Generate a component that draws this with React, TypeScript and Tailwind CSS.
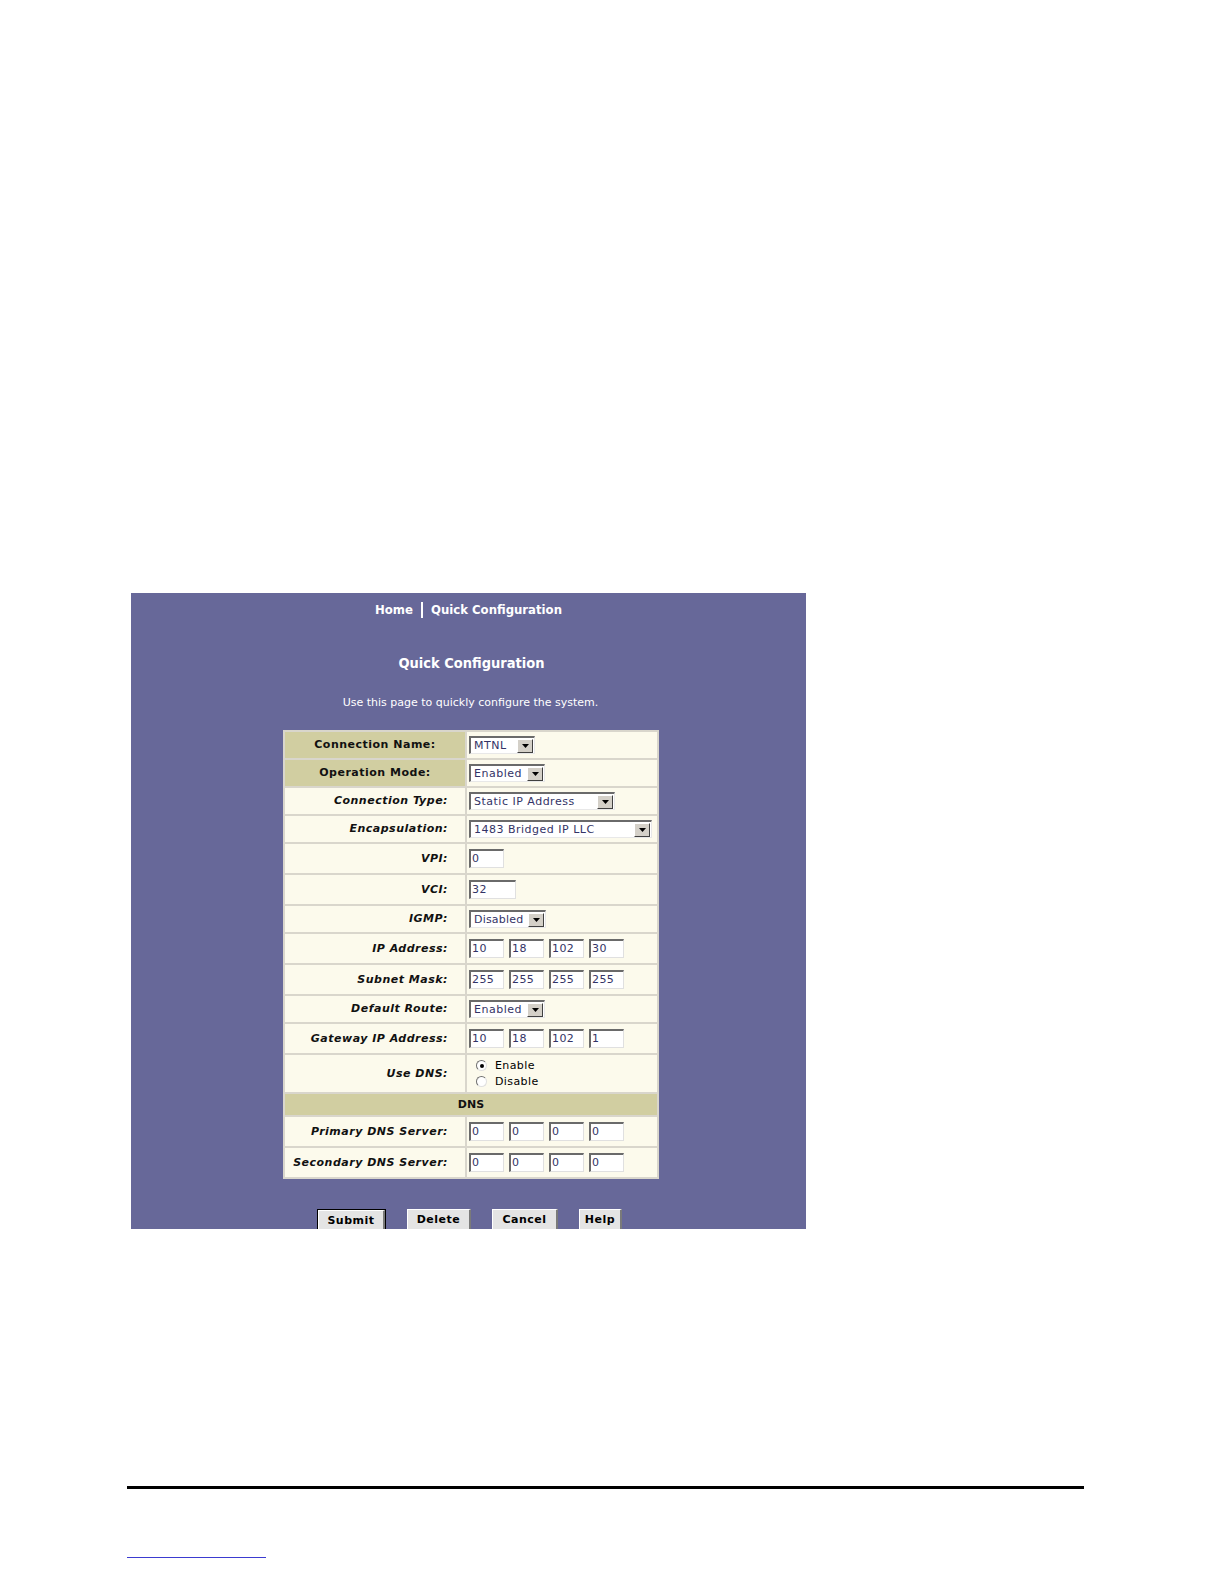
import React from "react";

const labelFont = "font-['DejaVu_Sans',Verdana,sans-serif]";

function Arrow() {
  return (
    <div className="w-[16px] h-[14px] bg-[#d4d0c8] border-t border-l border-t-white border-l-white border-b border-r border-b-[#404040] border-r-[#404040] flex items-center justify-center shrink-0">
      <svg width="7" height="4" viewBox="0 0 7 4">
        <path d="M0 0 H7 L3.5 4 Z" fill="#000" />
      </svg>
    </div>
  );
}

function Sel({ v, cls, tight }: { v: string; cls: string; tight?: boolean }) {
  return (
    <div
      className={`inline-flex items-center justify-between h-[18px] bg-white border-t-2 border-l-2 border-t-[#6a6a6a] border-l-[#6a6a6a] border-b border-r border-b-[#e8e8e8] border-r-[#e8e8e8] pl-[3px] pr-[1px] ${cls}`}
    >
      <span
        className={`${labelFont} text-[11px] leading-[14px] text-[#333366] ${
          tight ? "tracking-[0.2px]" : "tracking-[0.5px]"
        } whitespace-nowrap`}
      >
        {v}
      </span>
      <Arrow />
    </div>
  );
}

function Inp({ v, cls = "w-[35px]" }: { v: string; cls?: string }) {
  return (
    <div
      className={`h-[19px] bg-white border-t-2 border-l-2 border-t-[#6a6a6a] border-l-[#6a6a6a] border-b border-r border-b-[#e0e0e0] border-r-[#e0e0e0] pl-[1px] flex items-center shrink-0 ${cls}`}
    >
      <span className={`${labelFont} text-[11px] leading-[14px] text-[#333366] tracking-[0.4px]`}>{v}</span>
    </div>
  );
}

function Quad({ a }: { a: string[] }) {
  return (
    <div className="flex gap-[5px]">
      {a.map((x, i) => (
        <Inp key={i} v={x} cls="w-[35px]" />
      ))}
    </div>
  );
}

function Radio({ checked }: { checked?: boolean }) {
  return (
    <div className="w-[11px] h-[11px] rounded-full bg-white border border-t-[#707070] border-l-[#707070] border-b-[#e0e0e0] border-r-[#e0e0e0] flex items-center justify-center">
      {checked && <div className="w-[4px] h-[4px] rounded-full bg-black" />}
    </div>
  );
}

type Row = {
  label: string;
  h: string;
  head?: boolean;
  val: React.ReactNode;
};

const rows: Row[] = [
  { label: "Connection Name:", h: "h-[28px]", head: true, val: <Sel v="MTNL" cls="w-[66px]" /> },
  { label: "Operation Mode:", h: "h-[28px]", head: true, val: <Sel v="Enabled" cls="w-[76px]" /> },
  { label: "Connection Type:", h: "h-[28px]", val: <Sel v="Static IP Address" cls="w-[146px]" /> },
  { label: "Encapsulation:", h: "h-[28px]", val: <Sel v="1483 Bridged IP LLC" cls="w-[183px]" /> },
  { label: "VPI:", h: "h-[31px]", val: <Inp v="0" cls="w-[35px]" /> },
  { label: "VCI:", h: "h-[31px]", val: <Inp v="32" cls="w-[47px]" /> },
  { label: "IGMP:", h: "h-[28px]", val: <Sel v="Disabled" cls="w-[77px]" tight /> },
  { label: "IP Address:", h: "h-[31px]", val: <Quad a={["10", "18", "102", "30"]} /> },
  { label: "Subnet Mask:", h: "h-[31px]", val: <Quad a={["255", "255", "255", "255"]} /> },
  { label: "Default Route:", h: "h-[28px]", val: <Sel v="Enabled" cls="w-[76px]" /> },
  { label: "Gateway IP Address:", h: "h-[31px]", val: <Quad a={["10", "18", "102", "1"]} /> },
  {
    label: "Use DNS:",
    h: "h-[39px]",
    val: (
      <div className="flex flex-col gap-[2px] pl-[7px]">
        <div className="flex items-center gap-[8px] h-[14px]">
          <Radio checked />
          <span className={`${labelFont} text-[11px] leading-[14px] text-black tracking-[0.4px]`}>Enable</span>
        </div>
        <div className="flex items-center gap-[8px] h-[14px]">
          <Radio />
          <span className={`${labelFont} text-[11px] leading-[14px] text-black tracking-[0.4px]`}>Disable</span>
        </div>
      </div>
    ),
  },
];

const dnsRows: Row[] = [
  { label: "Primary DNS Server:", h: "h-[31px]", val: <Quad a={["0", "0", "0", "0"]} /> },
  { label: "Secondary DNS Server:", h: "h-[31px]", val: <Quad a={["0", "0", "0", "0"]} /> },
];

function TableRow({ r }: { r: Row }) {
  return (
    <div className={`flex ${r.h} border-b-2 border-[#d9d6cc]`}>
      <div
        className={`w-[182px] shrink-0 flex items-center border-r-2 border-[#d9d6cc] ${
          r.head ? "bg-[#d1cea1] justify-center" : "justify-end pr-[17px]"
        }`}
      >
        <span
          className={`${labelFont} text-[11px] leading-[14px] font-bold text-[#111] tracking-[0.5px] whitespace-nowrap ${
            r.head ? "" : "italic"
          }`}
        >
          {r.label}
        </span>
      </div>
      <div className="flex-1 flex items-center pl-[2px]">{r.val}</div>
    </div>
  );
}

function Btn({ t, cls, def }: { t: string; cls: string; def?: boolean }) {
  return (
    <div className={`${def ? "border border-black" : ""} shrink-0`}>
      <div
        className={`h-[22px] bg-[#e4e4e4] border-t border-l border-t-white border-l-white border-b-2 border-r-2 border-b-[#7a7a7a] border-r-[#7a7a7a] flex items-center justify-center ${cls}`}
      >
        <span className={`${labelFont} text-[11px] leading-[14px] font-bold text-black tracking-[0.5px]`}>{t}</span>
      </div>
    </div>
  );
}

export default function App() {
  return (
    <div className="w-[1224px] h-[1584px] bg-white pt-[593px]">
      <div className="ml-[131px] w-[675px] h-[636px] bg-[#676899] overflow-hidden">
        <div className="pt-[9px] flex justify-center items-center h-[25px] font-['DejaVu_Sans_Condensed',Tahoma,sans-serif] text-[13px] leading-[16px] font-bold text-white">
          <span>Home</span>
          <span className="inline-block w-[2px] h-[16px] bg-white mx-[8px]" />
          <span>Quick Configuration</span>
        </div>
        <div className="mt-[37px] h-[16px] flex items-center justify-center font-['DejaVu_Sans_Condensed',Tahoma,sans-serif] text-[14.5px] leading-[16px] font-bold text-white pl-[6px]">
          Quick Configuration
        </div>
        <div className="mt-[25px] text-center font-['DejaVu_Sans',Tahoma,sans-serif] text-[11px] leading-[14px] text-white pl-[4px]">
          Use this page to quickly configure the system.
        </div>
        <div className="mt-[20px] ml-[152px] w-[376px] bg-[#fcfaec] border-t-2 border-l-2 border-r-2 border-[#d9d6cc]">
          {rows.map((r, i) => (
            <TableRow key={i} r={r} />
          ))}
          <div className="h-[23px] bg-[#d1cea1] border-b-2 border-[#d9d6cc] flex items-center justify-center">
            <span className={`${labelFont} text-[11px] leading-[14px] font-bold text-[#111]`}>DNS</span>
          </div>
          {dnsRows.map((r, i) => (
            <TableRow key={i} r={r} />
          ))}
        </div>
        <div className="mt-[30px] flex justify-center gap-[21px] pl-[2px]">
          <Btn t="Submit" cls="w-[67px]" def />
          <Btn t="Delete" cls="w-[64px]" />
          <Btn t="Cancel" cls="w-[66px]" />
          <Btn t="Help" cls="w-[43px]" />
        </div>
      </div>
      <div className="mt-[257px] ml-[127px] w-[957px] h-[3px] bg-black" />
      <div className="mt-[68px] ml-[127px] w-[139px] h-[1px] bg-[#3b3bd0]" />
    </div>
  );
}
